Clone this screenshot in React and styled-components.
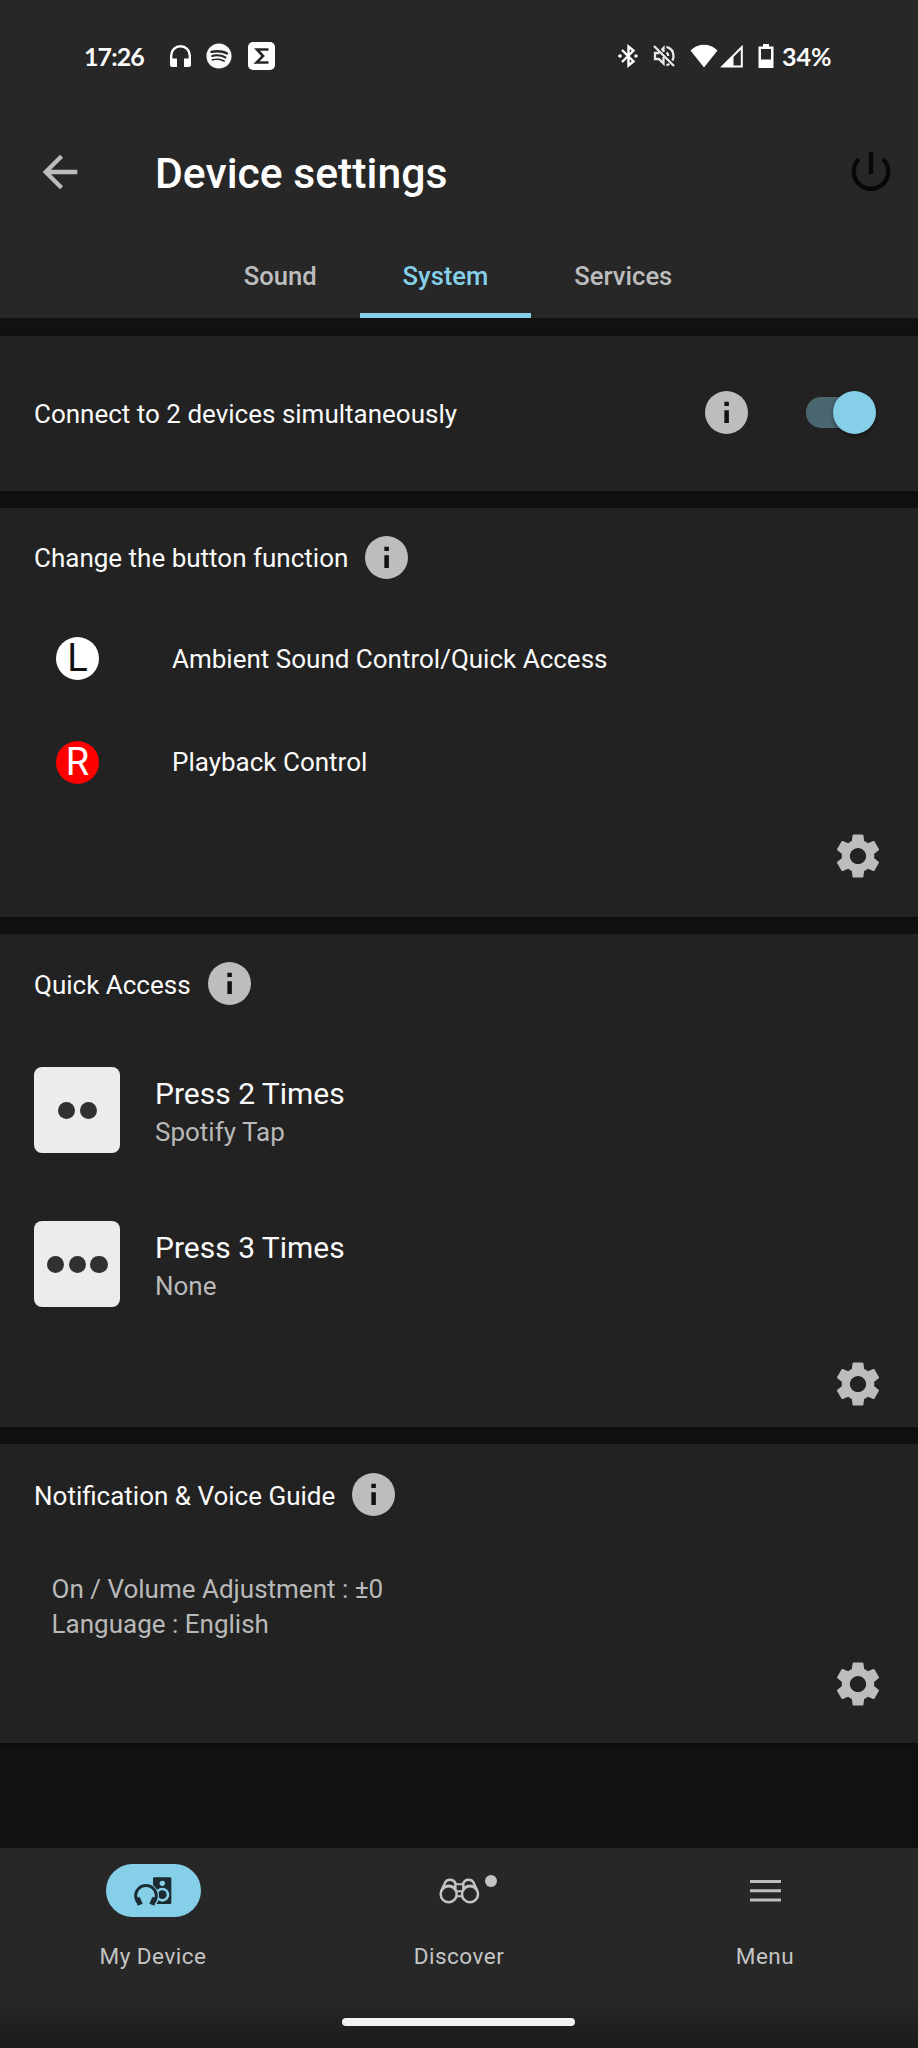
import { useState } from "react"
import styled, { createGlobalStyle } from "styled-components"
import { MdSettings, MdArrowBack } from "react-icons/md"
import { FaSpotify } from "react-icons/fa"

const GlobalStyle = createGlobalStyle`
  *{
    box-sizing: border-box;
  }
  body{
    margin: 0;
    background-color: #111111;
    color: #fafafa;
    font-family: Roboto, "Liberation Sans", sans-serif;
  }
  svg{
    display: block;
    flex-shrink: 0;
  }
`

const Button = styled.button`
  border: none;
  background: none;
  padding: 0;
  color: inherit;
  font: inherit;
  cursor: pointer;
`

const Screen = styled.div`
  width: 918px;
  height: 2048px;
  display: flex;
  flex-direction: column;
  background-color: #111111;
  overflow: hidden;
`

const StatusBar = styled.div`
  height: 112px;
  padding: 0 85px 0 84px;
  display: flex;
  align-items: center;
  justify-content: space-between;
  background-color: #272727;
  font-family: Lato, sans-serif;
  font-size: 25px;
  font-weight: 700;
`

const StatusGroup = styled.div`
  display: flex;
  align-items: center;
  gap: ${({ $gap }) => $gap}px;
`

const Clock = styled.span`
  width: 70px;
  letter-spacing: -0.9px;
`

const Percent = styled.span`
  width: 51px;
  margin-left: -6px;
`

const Header = styled.header`
  height: 123px;
  padding: 0 27px 3px 34px;
  display: flex;
  align-items: center;
  color: #bdbdbd;
  background-color: #272727;
`

const Title = styled.h1`
  margin: 0 0 0 69px;
  padding-top: 2px;
  flex: 1;
  color: #ffffff;
  font-size: 42.7px;
  font-weight: 500;
`

const Tabs = styled.nav`
  height: 83px;
  display: flex;
  justify-content: center;
  padding-right: 2px;
  background-color: #272727;
  border-top: 1px solid #242424;
`

const Tab = styled(Button)`
  padding: 2px 43px 0;
  border-bottom: 5px solid ${({ $active }) => ($active ? "#85cfe8" : "transparent")};
  color: ${({ $active }) => ($active ? "#85cfe8" : "#bdbdbd")};
  font-size: 25.6px;
  font-weight: 500;
`

const Content = styled.main`
  flex: 1;
  padding-top: 18px;
  display: flex;
  flex-direction: column;
  gap: 17.3px;
`

const Card = styled.section`
  height: ${({ $height }) => $height}px;
  display: flex;
  flex-direction: column;
  background-color: #222222;
  box-shadow: 0 2px 4px #0c0c0c;
  font-size: 26px;
`

const ConnectRow = styled.div`
  height: 100%;
  padding: 0 42px 1px 34px;
  display: flex;
  align-items: center;
  gap: 58px;
`

const Label = styled.span`
  flex: 1;
  padding-top: 2px;
`

const CardTitle = styled.div`
  height: ${({ $height = 99 }) => $height}px;
  padding-left: 34px;
  display: flex;
  align-items: center;
  gap: 17px;
  span{
    padding-top: 2px;
  }
`

const Track = styled(Button)`
  position: relative;
  width: 70px;
  height: 43px;
  display: flex;
  align-items: center;
  justify-content: ${({ $on }) => ($on ? "flex-end" : "flex-start")};
  &::before{
    content: "";
    position: absolute;
    inset: 6px 0;
    right: 6px;
    border-radius: 15px;
    background-color: #4a666f;
  }
`

const Knob = styled.span`
  position: relative;
  width: 43px;
  height: 43px;
  border-radius: 50%;
  background-color: #85cfe8;
  box-shadow: 0 2px 4px #00000066;
`

const ButtonRow = styled.div`
  height: 103.3px;
  padding: 1px 0 0 56px;
  display: flex;
  align-items: center;
  gap: 73px;
`

const Side = styled.span`
  width: 43px;
  height: 43px;
  display: flex;
  align-items: center;
  justify-content: center;
  border-radius: 50%;
  font-size: 38px;
  line-height: 43px;
  color: ${({ $red }) => ($red ? "#ffffff" : "#111111")};
  background-color: ${({ $red }) => ($red ? "#ff0000" : "#ffffff")};
`

const PressRow = styled.div`
  height: 154px;
  padding-left: 34.4px;
  display: flex;
  align-items: center;
  gap: 34.6px;
`

const Tile = styled.div`
  width: 86px;
  height: 86px;
  display: flex;
  align-items: center;
  justify-content: center;
  gap: 4.4px;
  border-radius: 8px;
  background-color: #ececec;
`

const Dot = styled.span`
  width: 17.2px;
  height: 17.2px;
  border-radius: 50%;
  background-color: #313131;
`

const PressText = styled.div`
  padding-top: 6px;
  line-height: 36px;
  font-size: 30px;
  p{
    margin: 0;
    padding-top: 2px;
    font-size: 26px;
    color: #b9b9b9;
  }
`

const Summary = styled.div`
  height: 96px;
  padding: 27px 0 0 51.6px;
  line-height: 35px;
  color: #b9b9b9;
`

const Footer = styled.div`
  padding: 16px 33px 0 0;
  display: flex;
  justify-content: flex-end;
  color: #bdbdbd;
`

const BottomBar = styled.nav`
  height: 200px;
  display: flex;
  flex-direction: column;
  align-items: center;
  background: linear-gradient(#272727 150px, #1b1b1b 200px);
`

const NavItems = styled.div`
  width: 100%;
  height: 170px;
  padding-top: 16px;
  display: grid;
  grid-template-columns: repeat(3, 1fr);
`

const NavItem = styled(Button)`
  display: flex;
  flex-direction: column;
  align-items: center;
  gap: 26px;
  color: #c4c4c4;
  font-size: 22.5px;
  letter-spacing: 0.5px;
`

const Pill = styled.span`
  position: relative;
  width: 95px;
  height: 53px;
  display: flex;
  align-items: center;
  justify-content: center;
  border-radius: 27px;
  background-color: ${({ $active }) => ($active ? "#85cfe8" : "transparent")};
`

const Badge = styled.span`
  position: absolute;
  top: 11px;
  right: 10px;
  width: 12px;
  height: 12px;
  border-radius: 50%;
  background-color: #c4c4c4;
`

const HomeHandle = styled.div`
  width: 233px;
  height: 8px;
  margin-right: 1px;
  border-radius: 4px;
  background-color: #f2f2f2;
`

function InfoIcon() {
  return (
    <svg width="43" height="43" viewBox="0 0 20 20">
      <circle cx="10" cy="10" r="10" fill="#bdbdbd" />
      <path d="M9 5h2.1v2H9zM9 9h2.1v5.9H9z" fill="#111111" />
    </svg>
  )
}

function PowerIcon() {
  return (
    <svg width="40" height="40" viewBox="0 0 40 40" fill="none" stroke="#080808" strokeWidth="4.4">
      <path d="M20 0v22" />
      <path d="M8 7a17.300 17.300 0 1 0 24 0" />
    </svg>
  )
}

function HeadphonesIcon() {
  return (
    <svg width="21" height="22" viewBox="0 0 21 22" fill="#ffffff">
      <path d="M0 10.5a10.5 10.5 0 0 1 21 0V19.500a2.500 2.500 0 0 1-2.500 2.500H14V13.500h4.600v-3a8.100 8.100 0 0 0-16.200 0v3H7V22H2.500A2.500 2.500 0 0 1 0 19.500z" />
    </svg>
  )
}

function SumIcon() {
  return (
    <svg width="27" height="28" viewBox="0 0 27 28">
      <rect width="27" height="28" rx="5" fill="#ffffff" />
      <path d="M20.500 7.500H9L15 14l-6.500 6.500h12" fill="none" stroke="#272727" strokeWidth="2.600" />
    </svg>
  )
}

function BluetoothIcon() {
  return (
    <svg width="20" height="24" viewBox="0 0 20 24" fill="none" stroke="#ffffff" strokeWidth="2.400">
      <path d="M4 6l11.500 11.500L10.500 21.500v-19L15.500 6.500 4 18" />
      <circle cx="2" cy="12" r="1.800" fill="#ffffff" stroke="none" />
      <circle cx="18" cy="12" r="1.800" fill="#ffffff" stroke="none" />
    </svg>
  )
}

function MutedIcon() {
  return (
    <svg width="23" height="22" viewBox="0 0 23 22" fill="none" stroke="#e8e8e8" strokeWidth="2.300">
      <path d="M1 1l20 20" />
      <path d="M6.500 8H2v6h3.800l4.700 4.500V12M8.500 5l2-2v4" />
      <path d="M13.500 7.500c1.200.8 1.800 2 1.800 3.500M13.500 1.800c4 1.200 7 4.700 7 9.200 0 1.800-.4 3.300-1.200 4.600M13.500 20.200c1-.3 2-.8 2.800-1.400" />
    </svg>
  )
}

function WifiIcon() {
  return (
    <svg width="28" height="24" viewBox="0 0 28 24" fill="#ffffff">
      <path d="M14 23.500L.5 6.500C4.300 2.800 9 .8 14 .8s9.700 2 13.500 5.700z" />
    </svg>
  )
}

function SignalIcon() {
  return (
    <svg width="23" height="24" viewBox="0 0 23 24">
      <path d="M2.500 22.600H21.800V3.200z" fill="none" stroke="#ffffff" strokeWidth="2" />
      <path d="M1 23L13.500 10.500V23z" fill="#ffffff" />
    </svg>
  )
}

function BatteryIcon() {
  return (
    <svg width="16" height="24" viewBox="0 0 16 24">
      <path d="M5 0h6v2.500h4.500V24H.500V2.500H5z" fill="#ffffff" />
      <path d="M3 5h10v10.500H3z" fill="#272727" />
    </svg>
  )
}

function MyDeviceIcon() {
  return (
    <svg width="40" height="30" viewBox="158 104 120 90" fill="none">
      <rect x="218" y="108" width="55" height="80" rx="4" fill="#1c2b31" />
      <circle cx="246" cy="126" r="8" fill="#85cfe8" />
      <circle cx="246" cy="160" r="21" fill="#85cfe8" />
      <circle cx="246" cy="160" r="13" fill="#1c2b31" />
      {/* gap between the headband and the speaker */}
      <circle cx="197" cy="165" r="39" fill="#85cfe8" />
      <path d="M173 183a31 31 0 1 1 48 0" stroke="#1c2b31" strokeWidth="9" />
      <path d="M165 170l13-3 9 20-15 6zM229 170l-13-3-9 20 15 6z" fill="#1c2b31" />
    </svg>
  )
}

function BinocularsIcon() {
  return (
    <svg width="43" height="28" viewBox="143 110 129 84" fill="none" stroke="#c4c4c4" strokeWidth="7.500">
      <circle cx="175" cy="162" r="24" />
      <circle cx="239" cy="162" r="24" />
      <path d="M153 151l12-25c5-11 25-11 30 2v22M261 151l-12-25c-5-11-25-11-30 2v22" />
      <path d="M164 139c7-4 18-4 27 2M250 139c-7-4-18-4-27 2" strokeWidth="6" />
      <path d="M196 132h22M198 153h18M198 168h18" strokeWidth="6" />
    </svg>
  )
}

function MenuIcon() {
  return (
    <svg width="31" height="22" viewBox="0 0 31 22" fill="#bdbdbd">
      <path d="M0 0h31v3H0zM0 9.200h31v3H0zM0 18.400h31v3H0z" />
    </svg>
  )
}

const tabs = ["Sound", "System", "Services"]

const presses = [
  { count: 2, action: "Spotify Tap" },
  { count: 3, action: "None" },
]

function App() {
  const [tab, setTab] = useState("System")
  const [multi, setMulti] = useState(true)

  return (
    <Screen>
      <GlobalStyle />
      <StatusBar>
        <StatusGroup $gap={15.5}>
          <Clock>17:26</Clock>
          <HeadphonesIcon />
          <FaSpotify size={26} />
          <SumIcon />
        </StatusGroup>
        <StatusGroup $gap={14.5}>
          <BluetoothIcon />
          <MutedIcon />
          <StatusGroup $gap={2}>
            <WifiIcon />
            <SignalIcon />
          </StatusGroup>
          <BatteryIcon />
          <Percent>34%</Percent>
        </StatusGroup>
      </StatusBar>
      <Header>
        <MdArrowBack size={52} />
        <Title>Device settings</Title>
        <PowerIcon />
      </Header>
      <Tabs>
        {tabs.map((name) => (
          <Tab key={name} $active={tab === name} onClick={() => setTab(name)}>{name}</Tab>
        ))}
      </Tabs>

      <Content>
        <Card $height={154.5}>
          <ConnectRow>
            <Label>Connect to 2 devices simultaneously</Label>
            <InfoIcon />
            <Track $on={multi} onClick={() => setMulti(!multi)}>
              <Knob />
            </Track>
          </ConnectRow>
        </Card>

        <Card $height={409}>
          <CardTitle>
            <span>Change the button function</span>
            <InfoIcon />
          </CardTitle>
          <ButtonRow>
            <Side>L</Side>
            <span>Ambient Sound Control/Quick Access</span>
          </ButtonRow>
          <ButtonRow>
            <Side $red>R</Side>
            <span>Playback Control</span>
          </ButtonRow>
          <Footer>
            <MdSettings size={54} />
          </Footer>
        </Card>

        <Card $height={493}>
          <CardTitle>
            <span>Quick Access</span>
            <InfoIcon />
          </CardTitle>
          {presses.map(({ count, action }) => (
            <PressRow key={count}>
              <Tile>
                {Array.from({ length: count }, (_, i) => <Dot key={i} />)}
              </Tile>
              <PressText>
                Press {count} Times
                <p>{action}</p>
              </PressText>
            </PressRow>
          ))}
          <Footer>
            <MdSettings size={54} />
          </Footer>
        </Card>

        <Card $height={299}>
          <CardTitle $height={101}>
            <span>Notification &amp; Voice Guide</span>
            <InfoIcon />
          </CardTitle>
          <Summary>
            On / Volume Adjustment : ±0
            <br />
            Language : English
          </Summary>
          <Footer>
            <MdSettings size={54} />
          </Footer>
        </Card>
      </Content>

      <BottomBar>
        <NavItems>
          <NavItem>
            <Pill $active>
              <MyDeviceIcon />
            </Pill>
            My Device
          </NavItem>
          <NavItem>
            <Pill>
              <BinocularsIcon />
              <Badge />
            </Pill>
            Discover
          </NavItem>
          <NavItem>
            <Pill>
              <MenuIcon />
            </Pill>
            Menu
          </NavItem>
        </NavItems>
        <HomeHandle />
      </BottomBar>
    </Screen>
  )
}

export default App
